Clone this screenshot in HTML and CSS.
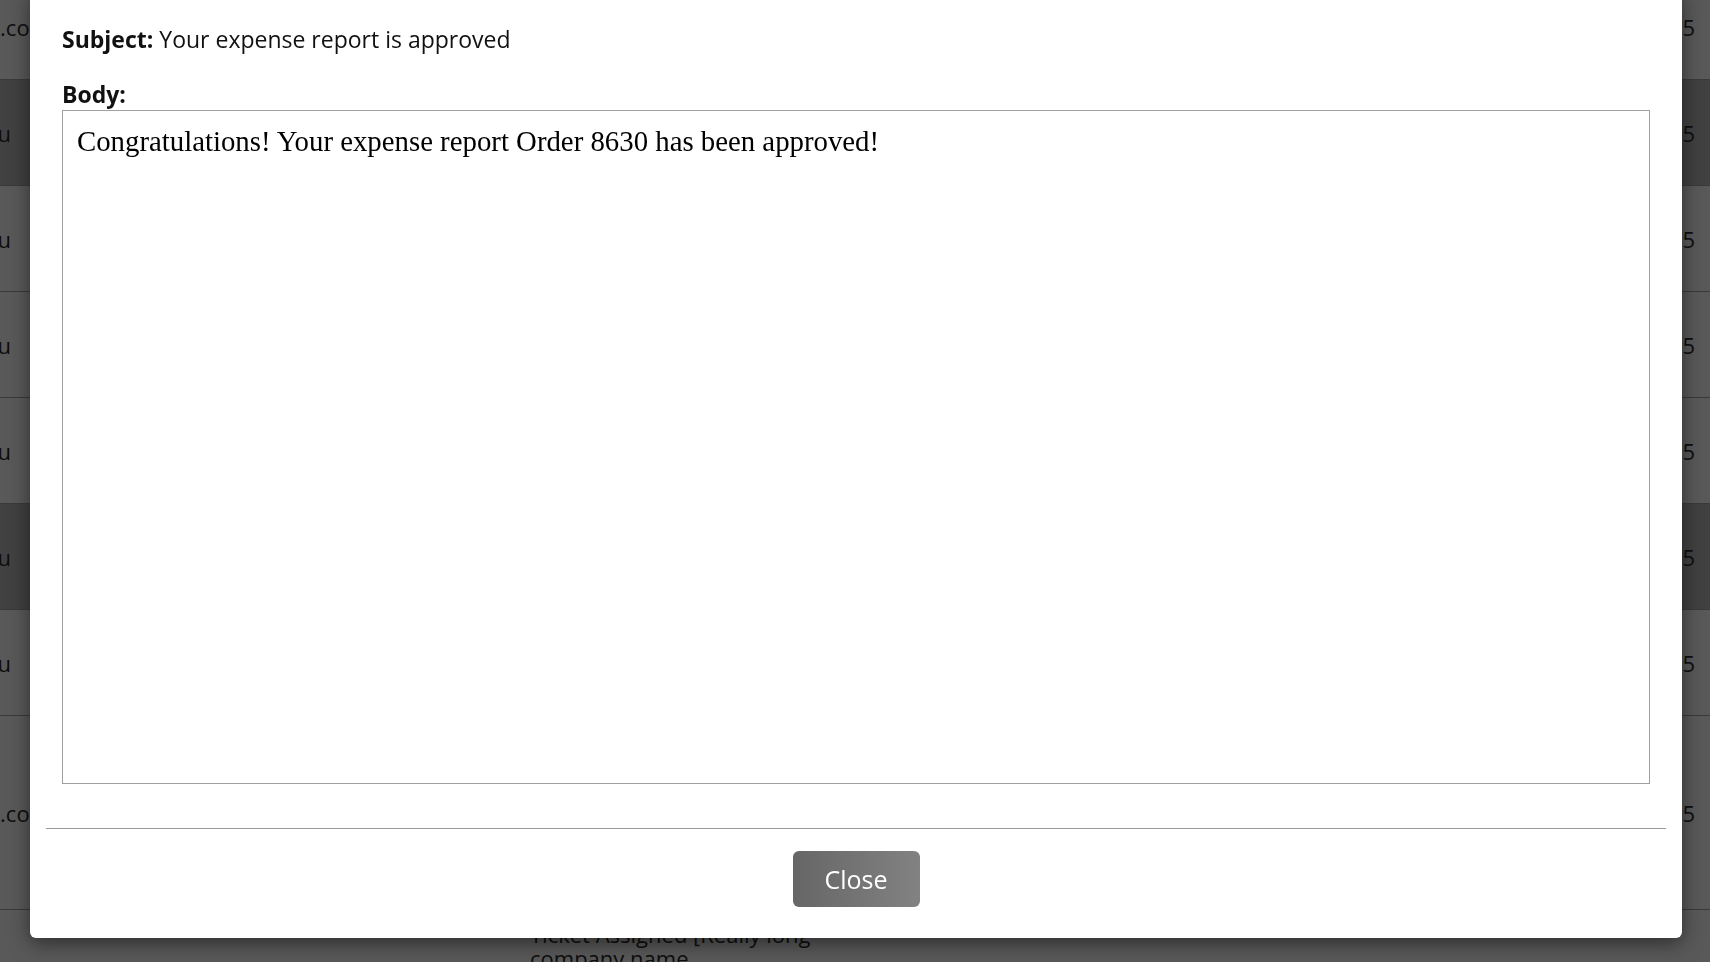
FILE: index.html
```html
<!DOCTYPE html>
<html lang="en">
<head>
  <meta charset="UTF-8">
  <meta name="viewport" content="width=device-width, initial-scale=1.0">
  <title>Email Log</title>
  <link rel="stylesheet" href="styles.css">
</head>
<body>
  <div class="log">
    <div class="row">
      <div class="cell-email">jane.doe@acme.com</div>
      <div class="cell-subject">Password reset requested</div>
      <div class="cell-date">Apr 5</div>
    </div>
    <div class="row selected">
      <div class="cell-email short">student@school.edu</div>
      <div class="cell-subject">Your expense report is approved</div>
      <div class="cell-date">Apr 5</div>
    </div>
    <div class="row">
      <div class="cell-email short">student@school.edu</div>
      <div class="cell-subject">Ticket Assigned</div>
      <div class="cell-date">Apr 5</div>
    </div>
    <div class="row">
      <div class="cell-email short">student@school.edu</div>
      <div class="cell-subject">Ticket Closed</div>
      <div class="cell-date">Apr 5</div>
    </div>
    <div class="row">
      <div class="cell-email short">student@school.edu</div>
      <div class="cell-subject">Welcome aboard</div>
      <div class="cell-date">Apr 5</div>
    </div>
    <div class="row selected">
      <div class="cell-email short">student@school.edu</div>
      <div class="cell-subject">Your expense report is approved</div>
      <div class="cell-date">Apr 5</div>
    </div>
    <div class="row">
      <div class="cell-email short">student@school.edu</div>
      <div class="cell-subject">Ticket Assigned</div>
      <div class="cell-date">Apr 5</div>
    </div>
    <div class="row tall">
      <div class="cell-email">jane.doe@acme.com</div>
      <div class="cell-subject">Ticket Assigned [Really long company name]</div>
      <div class="cell-date">Apr 5</div>
    </div>
    <div class="row tall last">
      <div class="cell-email">jane.doe@acme.com</div>
      <div class="cell-subject">Ticket Assigned [Really long company name Incorporated]</div>
      <div class="cell-date">Apr 5</div>
    </div>
  </div>

  <div class="backdrop"></div>

  <div class="modal">
    <div class="modal-body">
      <p class="subject"><b>Subject:</b> Your expense report is approved</p>
      <div class="body-label">Body:</div>
      <div class="mail-body">Congratulations! Your expense report Order 8630 has been approved!</div>
    </div>
    <div class="modal-footer">
      <button class="btn-close">Close</button>
    </div>
  </div>
</body>
</html>
```

FILE: styles.css
```css
body {
  margin: 0;
  height: 100vh;
  overflow: hidden;
  background-color: #fff;
  font-family: 'Open Sans', 'Liberation Sans', sans-serif;
  color: #2b2b2b;
}

/* table behind the dialog, scrolled a little */
.log {
  margin-top: -26px;
}

.row {
  display: flex;
  align-items: center;
  height: 105px;
  border-bottom: 1px solid #a6a6a6;
  font-size: 22px;
  line-height: 24px;
}

.row.selected {
  background-color: #bababa;
}

.row.tall {
  height: 193px;
}

.row.last {
  border-bottom: none;
}

.row.last .cell-subject {
  align-self: flex-start;
  padding-top: 12px;
}

.cell-email {
  display: flex;
  justify-content: flex-end;
  width: 50px;
  flex-shrink: 0;
  white-space: nowrap;
}

.cell-email.short {
  width: 11px;
  padding-right: 39px;
}

.cell-subject {
  width: 300px;
  margin-left: 480px;
}

.cell-date {
  flex: 1;
  text-align: right;
  padding-right: 15px;
}

.backdrop {
  position: fixed;
  inset: 0;
  background-color: rgba(0, 0, 0, 0.65);
}

.modal {
  position: fixed;
  left: 30px;
  right: 28px;
  bottom: 24px;
  background-color: #fff;
  border-radius: 6px;
  box-shadow: 0 5px 20px rgba(0, 0, 0, 0.5);
  color: #111;
}

.modal-body {
  padding: 34px 32px 44px;
}

.subject {
  margin: 0 0 25px;
  font-size: 23px;
  line-height: 30px;
}

.body-label {
  font-size: 23px;
  font-weight: bold;
  line-height: 31px;
}

.mail-body {
  box-sizing: border-box;
  height: 674px;
  padding: 14px 14px;
  border: 1px solid #a0a0a0;
  font-family: 'Liberation Serif', 'Times New Roman', serif;
  font-size: 28.8px;
  line-height: 33px;
  color: #000;
}

.modal-footer {
  margin: 0 16px;
  padding: 22px 0 31px;
  border-top: 1px solid #999;
  text-align: center;
}

.btn-close {
  width: 127px;
  height: 56px;
  border: none;
  border-radius: 6px;
  background: linear-gradient(to right, #666, #828282);
  color: #fff;
  font-family: 'Open Sans', 'Liberation Sans', sans-serif;
  font-size: 25px;
  cursor: pointer;
}
```
